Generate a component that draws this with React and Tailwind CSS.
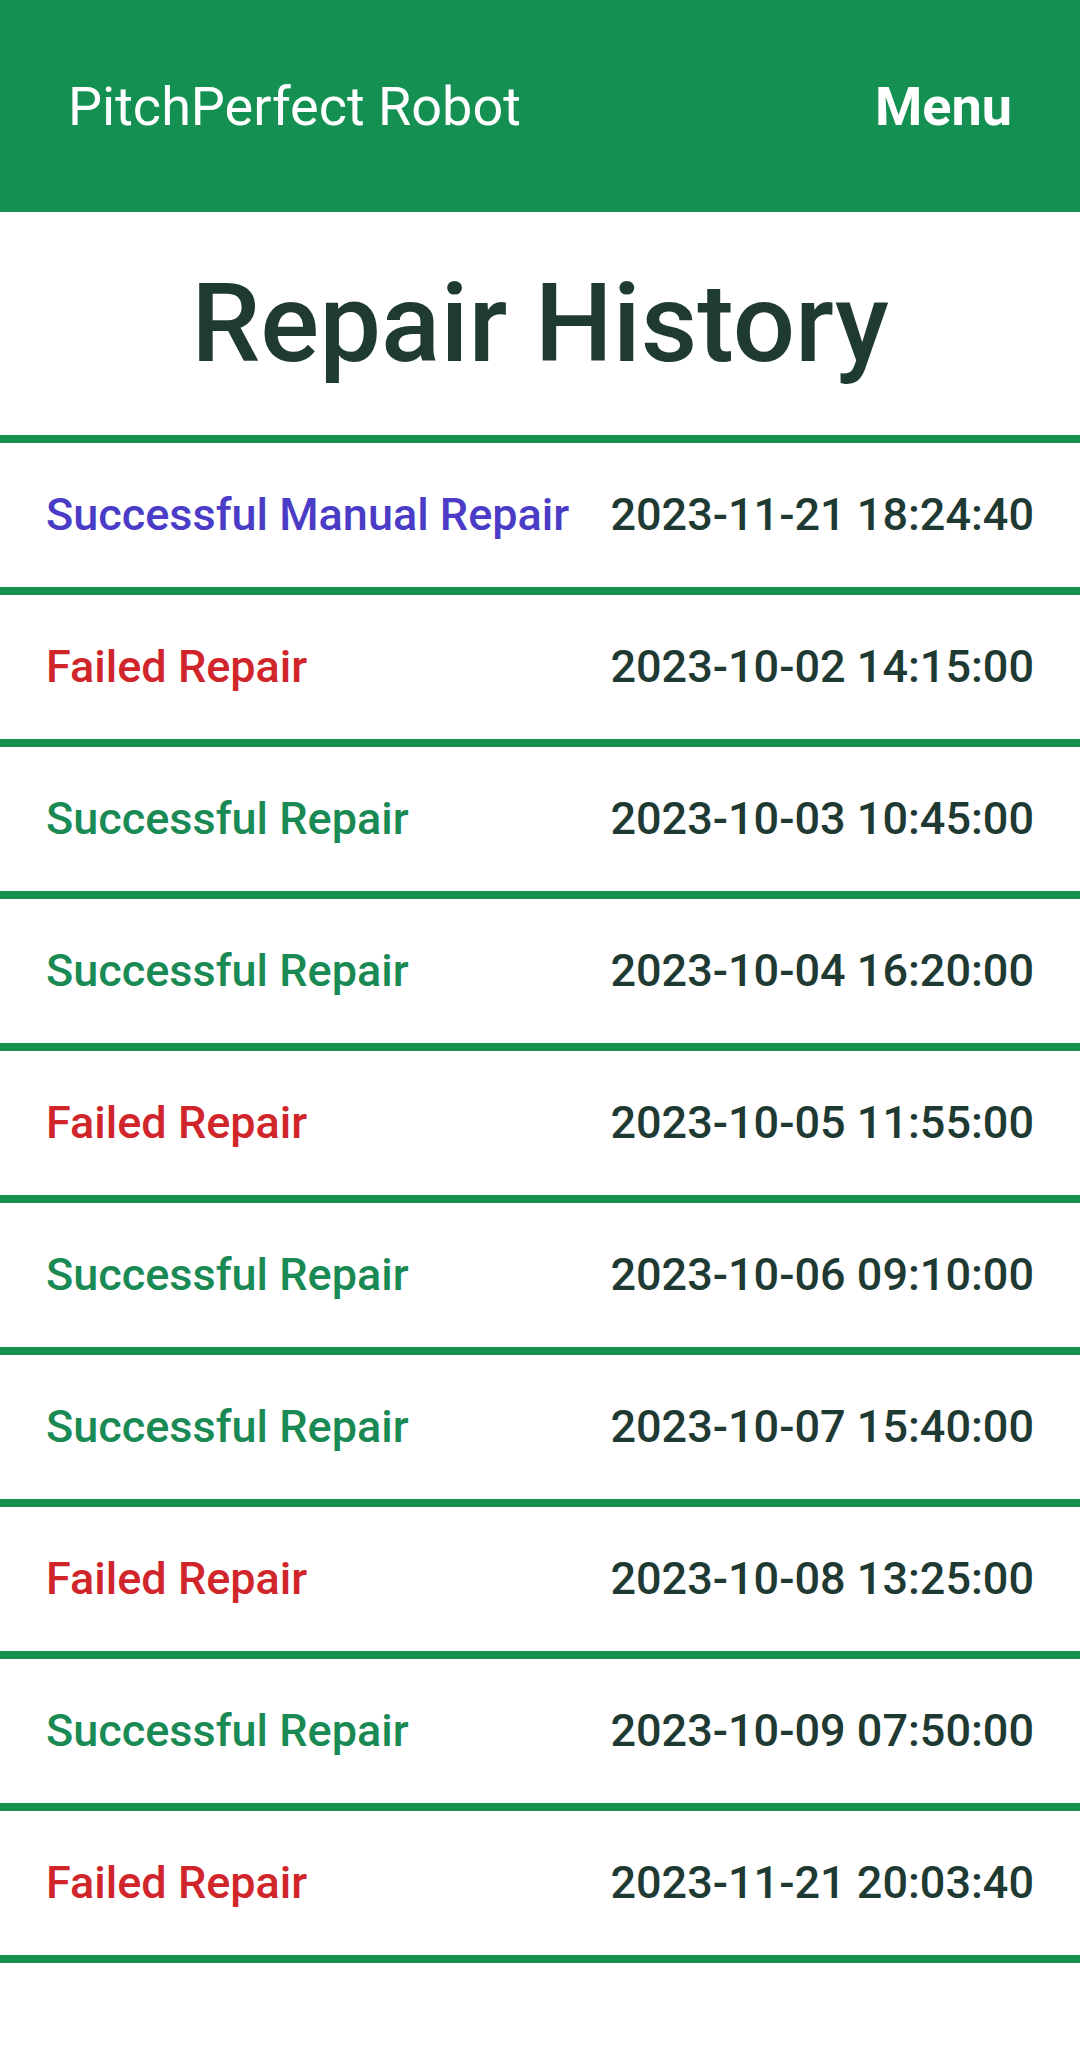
import React from 'react';

const repairs = [
  { kind: 'manual', label: 'Successful Manual Repair', at: '2023-11-21 18:24:40' },
  { kind: 'failed', label: 'Failed Repair', at: '2023-10-02 14:15:00' },
  { kind: 'ok', label: 'Successful Repair', at: '2023-10-03 10:45:00' },
  { kind: 'ok', label: 'Successful Repair', at: '2023-10-04 16:20:00' },
  { kind: 'failed', label: 'Failed Repair', at: '2023-10-05 11:55:00' },
  { kind: 'ok', label: 'Successful Repair', at: '2023-10-06 09:10:00' },
  { kind: 'ok', label: 'Successful Repair', at: '2023-10-07 15:40:00' },
  { kind: 'failed', label: 'Failed Repair', at: '2023-10-08 13:25:00' },
  { kind: 'ok', label: 'Successful Repair', at: '2023-10-09 07:50:00' },
  { kind: 'failed', label: 'Failed Repair', at: '2023-11-21 20:03:40' },
];

const labelColor = {
  manual: 'text-[#4a3cc6]',
  failed: 'text-[#d0262b]',
  ok: 'text-[#1a8a55]',
};

export default function App() {
  return (
    <div className="min-h-[2045px] bg-white font-['Roboto',sans-serif]">
      <header className="flex h-[212px] items-center justify-between bg-[#149152] px-[68px] text-white">
        <span className="text-[54px]">PitchPerfect Robot</span>
        <button className="text-[54px] font-bold">Menu</button>
      </header>

      <h1 className="flex h-[223px] items-center justify-center text-[110px] font-medium text-[#1e3a32]">
        Repair History
      </h1>

      <ul className="border-t-8 border-[#179152]">
        {repairs.map((r, i) => (
          <li
            key={i}
            className="flex h-[152px] items-center justify-between border-b-8 border-[#179152] px-[46px] text-[45px] font-medium"
          >
            <span className={labelColor[r.kind]}>{r.label}</span>
            <span className="text-[#1e3a32]">{r.at}</span>
          </li>
        ))}
      </ul>
    </div>
  );
}
